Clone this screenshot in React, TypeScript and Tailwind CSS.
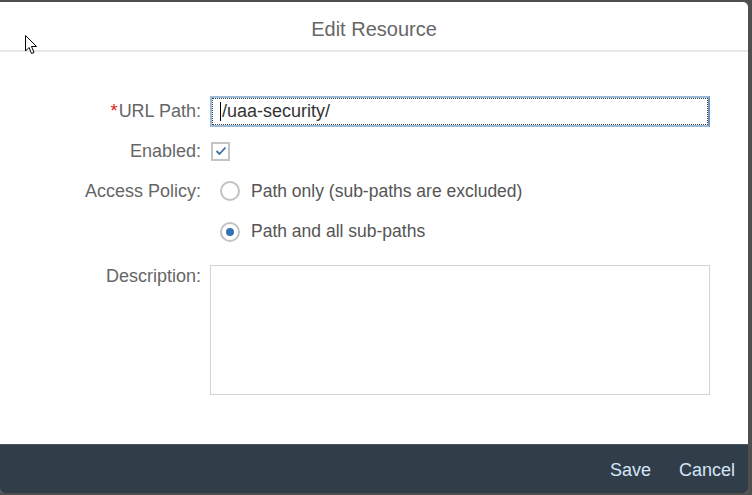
import { useState } from 'react';

const font = { fontFamily: '"Liberation Sans", Arial, sans-serif' };

function Radio({ checked, label, onClick }: { checked: boolean; label: string; onClick: () => void }) {
  return (
    <button onClick={onClick} className="flex items-center gap-[11px] text-[17.5px] text-[#555]">
      <span className="w-[20px] h-[20px] rounded-full border-2 border-[#c2c2c2] bg-white flex items-center justify-center">
        {checked && <span className="w-[8px] h-[8px] rounded-full bg-[#3572b0]" />}
      </span>
      {label}
    </button>
  );
}

export default function App() {
  const [path, setPath] = useState('/uaa-security/');
  const [enabled, setEnabled] = useState(true);
  const [policy, setPolicy] = useState<'only' | 'all'>('all');

  return (
    <div style={font} className="w-[752px] h-[495px] bg-[#4f4f4f] pt-[2px] pr-[4px] pb-[2px] overflow-hidden">
      <div className="relative h-full bg-white rounded-tr-[5px] rounded-br-[4px] rounded-bl-[4px] flex flex-col overflow-hidden">
        {/* mouse pointer */}
        <svg className="absolute left-[25px] top-[33px]" width="13" height="20" viewBox="0 0 13 20">
          <path d="M0.5 0.5 L0.5 16 L4 12.5 L6.5 18.5 L9 17.5 L6.5 11.5 L11.5 11.5 Z" fill="white" stroke="black" strokeWidth="1" strokeLinejoin="miter" />
        </svg>

        <div className="h-[50px] shrink-0 pt-[6px] flex items-center justify-center border-b-2 border-[#e8e8e8]">
          <h2 className="text-[20px] text-[#666]">Edit Resource</h2>
        </div>

        <div className="flex-1 pt-[44px]">
          <div className="grid grid-cols-[201px_500px] gap-x-[9px] text-[18px] text-[#666]">
            <label className="h-[31px] flex items-center justify-end">
              <span className="text-[#e02020] mr-[1px]">*</span>URL Path:
            </label>
            <div className="h-[31px] border-2 border-[#9dbbd9] border-r-[#6f95bd]">
              <div className="h-full border border-dotted border-[#444] flex items-center pl-[7px]">
                <span className="w-px h-[19px] bg-black mr-[1px]" />
                <input
                  value={path}
                  onChange={(e) => setPath(e.target.value)}
                  className="flex-1 outline-none text-[18px] text-[#333] bg-transparent"
                />
              </div>
            </div>

            <label className="mt-[9px] h-[30px] flex items-center justify-end">Enabled:</label>
            <div className="mt-[9px] h-[30px] flex items-center pl-[1px]">
              <button
                onClick={() => setEnabled(!enabled)}
                className="w-[19px] h-[19px] border-2 border-[#c4c4c4] bg-white flex items-center justify-center"
              >
                {enabled && (
                  <svg width="12" height="10" viewBox="0 0 12 10">
                    <path d="M1.5 5 L4.5 8 L10.5 1.5" fill="none" stroke="#3a6f9f" strokeWidth="1.8" />
                  </svg>
                )}
              </button>
            </div>

            <label className="mt-[5px] h-[40px] flex items-center justify-end">Access Policy:</label>
            <div className="mt-[5px] h-[40px] flex items-center pl-[10px]">
              <Radio checked={policy === 'only'} label="Path only (sub-paths are excluded)" onClick={() => setPolicy('only')} />
            </div>

            <div className="h-[41px]" />
            <div className="h-[41px] flex items-center pl-[10px]">
              <Radio checked={policy === 'all'} label="Path and all sub-paths" onClick={() => setPolicy('all')} />
            </div>

            <label className="mt-[11px] text-right">Description:</label>
            <textarea className="mt-[13px] h-[130px] border border-[#d4d4d4] resize-none outline-none p-2 text-[16px] text-[#333]" />
          </div>
        </div>

        <div className="h-[49px] shrink-0 bg-[#323d4a] border-t border-[#4a5664] flex items-center justify-end gap-[28px] pr-[13px] pt-[2px] text-[18px] text-[#d3e6f8]">
          <button>Save</button>
          <button>Cancel</button>
        </div>
      </div>
    </div>
  );
}
